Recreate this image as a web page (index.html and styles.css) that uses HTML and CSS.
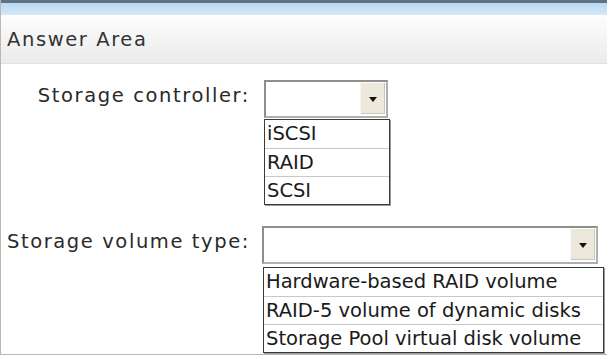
FILE: index.html
```html
<!DOCTYPE html>
<html lang="en">
<head>
    <meta charset="UTF-8">
    <title>Answer Area</title>
    <link rel="stylesheet" href="styles.css">
</head>
<body>
    <div class="panel">
        <div class="topbar"></div>
        <div class="header">Answer Area</div>
        <div class="form">
            <div class="row">
                <div class="label">Storage controller:</div>
                <div class="control short">
                    <div class="dropdown"><span class="arrow"></span></div>
                    <ul class="options">
                        <li>iSCSI</li>
                        <li>RAID</li>
                        <li>SCSI</li>
                    </ul>
                </div>
            </div>
            <div class="row second">
                <div class="label">Storage volume type:</div>
                <div class="control long">
                    <div class="dropdown"><span class="arrow"></span></div>
                    <ul class="options">
                        <li>Hardware-based RAID volume</li>
                        <li>RAID-5 volume of dynamic disks</li>
                        <li>Storage Pool virtual disk volume</li>
                    </ul>
                </div>
            </div>
        </div>
    </div>
</body>
</html>
```

FILE: styles.css
```css
body {
    margin: 0;
    background: #fff;
    font-family: "DejaVu Sans", Verdana, sans-serif;
    color: #222;
}
.panel {
    width: 607px;
    height: 355px;
    border-left: 1px solid #b8b8b8;
    border-bottom: 1px solid #b8b8b8;
    box-sizing: border-box;
}
.topbar {
    height: 12px;
    border-top: 3px solid #5f7286;
    background: linear-gradient(#bcd8f0, #d4e8f8);
}
.header {
    height: 46px;
    padding: 2px 0 0 6px;
    line-height: 46px;
    font-size: 19.5px;
    letter-spacing: 1.6px;
    color: #333;
    background: linear-gradient(#fdfdfd, #f6f6f6 40%, #ebebeb);
    border-bottom: 1px solid #e0e0e0;
}
.form {
    padding-top: 16px;
}
.row {
    display: flex;
    align-items: flex-start;
}
.row.second {
    margin-top: 21px;
}
.label {
    width: 249px;
    text-align: right;
    font-size: 19.5px;
    letter-spacing: 1.6px;
    line-height: 32px;
    color: #2a2a2a;
}
.control.short {
    margin-left: 14px;
}
.control.long {
    margin-left: 12px;
}
.dropdown {
    position: relative;
    height: 34px;
    border: 2px solid #8e8e8e;
    border-right-color: #b0b0b0;
    border-bottom-color: #b0b0b0;
    background: #fff;
}
.short .dropdown {
    width: 120px;
}
.long .dropdown {
    width: 332px;
}
.arrow {
    position: absolute;
    right: 1px;
    top: 1px;
    width: 24px;
    height: 31px;
    background: #ece9dc;
    border-left: 1px solid #f6f6f0;
    box-shadow: inset -1px -1px 0 #c8c5b8;
}
.arrow::after {
    content: "";
    position: absolute;
    left: 8px;
    top: 14px;
    border-left: 4px solid transparent;
    border-right: 4px solid transparent;
    border-top: 5px solid #111;
}
.options {
    list-style: none;
    margin: 1px 0 0;
    padding: 0;
    border: 1px solid #3a3a3a;
    box-shadow: 1px 1px 0 #9a9a9a;
    background: #fff;
}
.short .options {
    width: 124px;
}
.long .options {
    width: 339px;
    margin-left: 1px;
    margin-top: 3px;
}
.options li {
    height: 27px;
    line-height: 27px;
    padding-left: 2px;
    font-size: 19.5px;
    color: #1a1a1a;
    border-top: 1px solid #c8c8c8;
}
.options li:first-child {
    border-top: none;
    height: 28px;
}
```
